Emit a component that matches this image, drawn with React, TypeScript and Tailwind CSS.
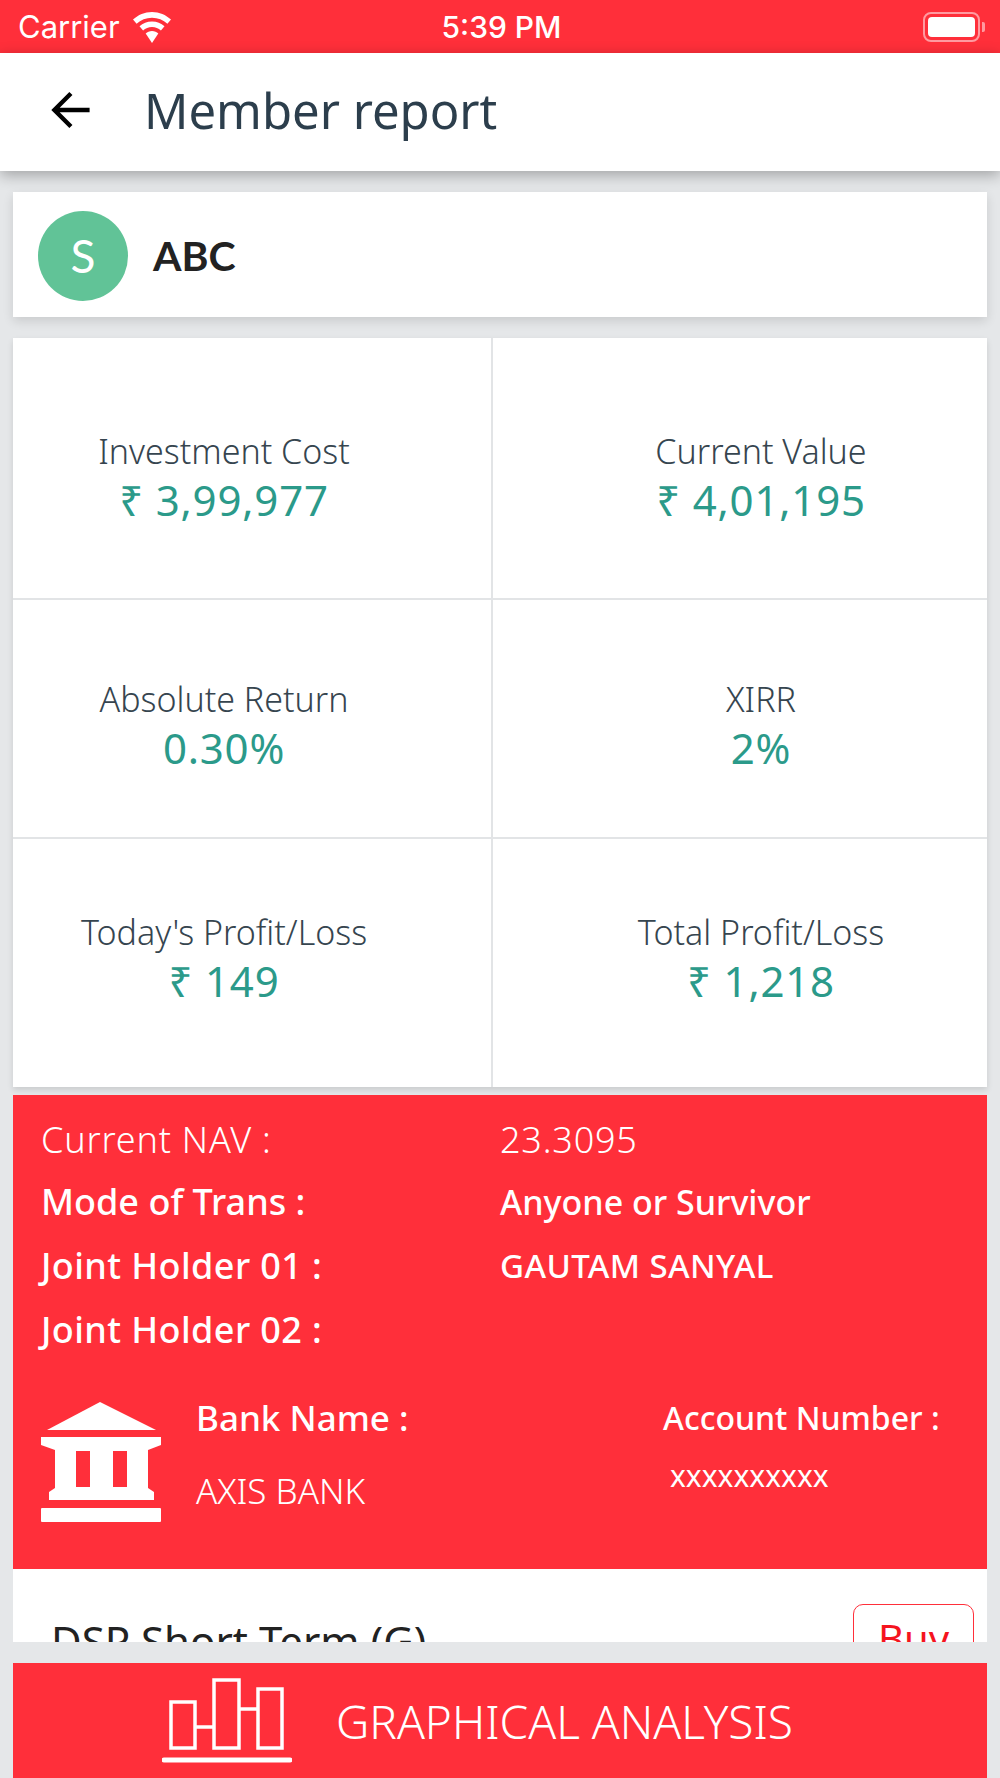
import React from 'react';

const ubuntu = 'font-["Noto_Sans",sans-serif]';

const Wifi = () => (
  <svg viewBox="0 0 40 34" className="w-[40px] h-[34px]" fill="#ffffff">
    <path d="M20 2C12.6 2 6.2 4.8 1 9.6l3.6 4.2C8.8 9.9 14.100 7.700 20 7.700s11.200 2.200 15.400 6.100L39 9.600C33.800 4.800 27.400 2 20 2z" />
    <path d="M20 11.500c-4.900 0-9.100 1.800-12.500 4.800l3.600 4.100c2.400-2.100 5.400-3.400 8.900-3.400s6.500 1.300 8.900 3.400l3.600-4.100c-3.400-3-7.600-4.800-12.500-4.800z" />
    <path d="M20 21c-2.500 0-4.700 .9-6.300 2.400L20 33l6.300-9.600C24.700 21.900 22.500 21 20 21z" />
  </svg>
);

const BankIcon = () => (
  <svg viewBox="0 0 120 120" className="w-[120px] h-[120px] shrink-0" fill="#ffffff">
    <path d="M59 0L115 28H6z" />
    <path fillRule="evenodd" d="M0 35h120v8l-13 5v38l6 4v8H8v-8l6-4V48L0 43zM35 49v36h14V49zM72 49v36h14V49z" />
    <rect x="0" y="106" width="120" height="14" rx="1" />
  </svg>
);

const ChartIcon = () => (
  <svg viewBox="0 0 130 85" className="w-[130px] h-[85px] shrink-0" fill="none" stroke="#ffffff" strokeWidth="3.500">
    <rect x="9" y="24" width="24" height="46" />
    <rect x="52" y="2" width="25" height="68" />
    <rect x="96" y="11" width="24" height="59" />
    <path d="M33 49h19M77 31h19" />
    <path d="M2 82h126" strokeWidth="5" strokeLinecap="round" />
  </svg>
);

const Stat = ({ label, value, className }: { label: string; value: string; className: string }) => (
  <div className={`flex flex-col items-center bg-white ${className}`}>
    <span className="text-[34px] leading-[46px] font-light text-[#36454f] whitespace-nowrap">{label}</span>
    <span className="text-[42px] leading-[52px] tracking-[0.8px] text-[#2b9a8a] whitespace-nowrap">{value}</span>
  </div>
);

const Row = ({ label, value, bold, className }: { label: string; value?: string; bold?: boolean; className?: string }) => (
  <div className={`flex items-center h-[64px] ${bold ? 'font-medium' : 'font-light'} ${className ?? ''}`}>
    <span className="w-[459px] text-[36px] whitespace-nowrap">{label}</span>
    {value && <span className="whitespace-nowrap">{value}</span>}
  </div>
);

const App = () => {
  return (
    <div className={`w-[1000px] h-[1778px] flex flex-col bg-[#e5e7e9] overflow-hidden ${ubuntu}`}>
      {/* Status bar */}
      <div className="h-[53px] shrink-0 bg-[#ff2f3a] text-white flex items-center justify-between pl-[18px] pr-[15px] font-['Inter',sans-serif]">
        <div className="flex items-center gap-[12px] w-[300px]">
          <span className="text-[31px] leading-none">Carrier</span>
          <Wifi />
        </div>
        <span className="text-[30px] leading-none font-medium">5:39 PM</span>
        <div className="w-[300px] flex justify-end items-center">
          <div className="w-[57px] h-[30px] rounded-[8px] border-2 border-[#ff9aa0] p-[3px]">
            <div className="w-full h-full bg-white rounded-[4px]" />
          </div>
          <div className="w-[3px] h-[10px] ml-[2px] rounded-r-[2px] bg-[#ff9aa0]" />
        </div>
      </div>

      {/* Header */}
      <div className="h-[118px] shrink-0 bg-white flex items-center pl-[50px] pb-[4px] gap-[50px] shadow-[0_4px_14px_rgba(0,0,0,0.3)] relative z-10">
        <svg viewBox="0 0 40 40" className="w-[44px] h-[44px] shrink-0" fill="none" stroke="#000000" strokeWidth="4">
          <path d="M36 20H5M19 5L4 20l15 15" />
        </svg>
        <span className="text-[49px] leading-none text-[#2c3e4c] whitespace-nowrap">Member report</span>
      </div>

      {/* Scrolling content */}
      <div className="h-[1471px] shrink-0 overflow-hidden px-[13px] pt-[21px]">
        <div className="h-[125px] bg-white flex items-center pl-[25px] pt-[2px] gap-[25px] shadow-[0_4px_10px_rgba(0,0,0,0.12)]">
          <div className="w-[90px] h-[90px] rounded-full bg-[#61c397] flex items-center justify-center text-white text-[46px] font-['Lato',sans-serif]">S</div>
          <span className="text-[41px] font-bold text-[#222222] font-['Lato',sans-serif]">ABC</span>
        </div>

        <div className="mt-[21px] flex flex-col gap-[2px] bg-[#e2e4e6] shadow-[0_3px_6px_rgba(0,0,0,0.12)]">
          <div className="h-[260px] grid grid-cols-[478px_494px] gap-[2px]">
            <Stat label="Investment Cost" value="₹ 3,99,977" className="pr-[56px] pt-[90px]" />
            <Stat label="Current Value" value="₹ 4,01,195" className="pl-[42px] pt-[90px]" />
          </div>
          <div className="h-[237px] grid grid-cols-[478px_494px] gap-[2px]">
            <Stat label="Absolute Return" value="0.30%" className="pr-[56px] pt-[76px]" />
            <Stat label="XIRR" value="2%" className="pl-[42px] pt-[76px]" />
          </div>
          <div className="h-[248px] grid grid-cols-[478px_494px] gap-[2px]">
            <Stat label="Today's Profit/Loss" value="₹ 149" className="pr-[56px] pt-[70px]" />
            <Stat label="Total Profit/Loss" value="₹ 1,218" className="pl-[42px] pt-[70px]" />
          </div>
        </div>

        <div className="mt-[8px] h-[474px] bg-[#ff2f3a] text-white pl-[28px] pt-[11px]">
          <Row label="Current NAV :" value="23.3095" className="pt-[4px] text-[36px] tracking-[0.8px]" />
          <Row label="Mode of Trans :" value="Anyone or Survivor" bold className="text-[34px]" />
          <Row label="Joint Holder 01 :" value="GAUTAM SANYAL" bold className="text-[33px] tracking-[0.4px]" />
          <Row label="Joint Holder 02 :" bold className="tracking-[0.4px]" />
          <div className="flex mt-[40px]">
            <BankIcon />
            <div className="ml-[35px] w-[467px] flex flex-col">
              <span className="text-[35px] leading-[32px] font-medium">Bank Name :</span>
              <span className="mt-[37px] text-[35px] leading-[40px] font-light">AXIS BANK</span>
            </div>
            <div className="flex flex-col">
              <span className="text-[32px] leading-[32px] font-medium whitespace-nowrap">Account Number :</span>
              <span className="mt-[22px] ml-[7px] text-[30px] leading-[40px]">xxxxxxxxxx</span>
            </div>
          </div>
        </div>

        <div className="h-[73px] bg-white flex justify-between pl-[38px] pr-[13px] overflow-hidden">
          <span className="mt-[47px] text-[42px] leading-[50px] text-[#222222] whitespace-nowrap">DSP Short Term (G)</span>
          <button className="mt-[35px] w-[121px] h-[70px] border border-[#ff2f3a] rounded-[10px] text-[#f5141e] text-[40px] leading-[50px] self-start">Buy</button>
        </div>
      </div>

      {/* Bottom action */}
      <div className="mt-[21px] mx-[13px] h-[115px] shrink-0 bg-[#ff2f3a] text-white flex items-center pl-[149px] gap-[44px]">
        <ChartIcon />
        <span className="text-[46px] leading-none font-light whitespace-nowrap">GRAPHICAL ANALYSIS</span>
      </div>
    </div>
  );
};

export default App;
